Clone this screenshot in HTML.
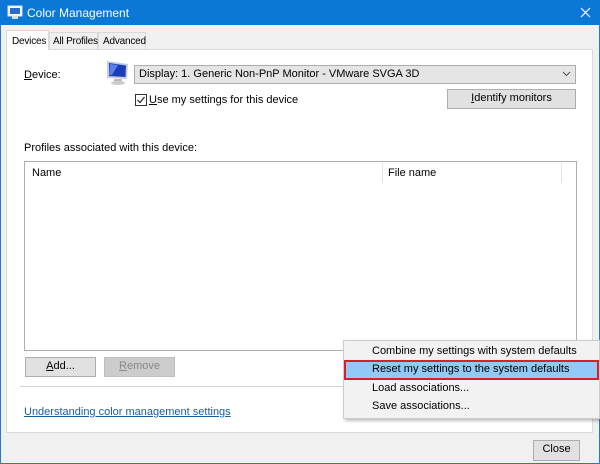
<!DOCTYPE html>
<html><head><meta charset="utf-8"><style>
*{box-sizing:border-box;margin:0;padding:0}
body{width:600px;height:464px;overflow:hidden;font-family:"Liberation Sans",sans-serif;font-size:11px;color:#000;background:#f0f0f0;position:relative}
.a{position:absolute;white-space:nowrap}
.btn{position:absolute;background:#e1e1e1;border:1px solid #adadad;text-align:center;line-height:17px;white-space:nowrap}
u{text-decoration:underline}
.tab{font-size:10px;letter-spacing:-0.2px}
</style></head><body>
<div class="a" style="left:0;top:0;width:600px;height:464px;border:1px solid #1f7ad0"></div>
<div class="a" style="left:0;top:0;width:600px;height:25px;background:#0a78d4"></div>
<svg class="a" style="left:7px;top:5px" width="16" height="15"><rect x="1" y="1" width="14" height="10" fill="#fff" stroke="#dde"/><rect x="3" y="3" width="10" height="6" fill="#2a6ac8"/><rect x="5" y="11" width="6" height="3" fill="#ddd"/></svg>
<div class="a" style="left:27px;top:6px;color:#fff;font-size:12px">Color Management</div>
<svg class="a" style="left:580px;top:7px" width="11" height="11"><path d="M1 1L10 10M10 1L1 10" stroke="#fff" stroke-width="1.2"/></svg>
<div class="a" style="left:6px;top:49px;width:587px;height:384px;background:#fff;border:1px solid #d9d9d9"></div>
<div class="a tab" style="left:6px;top:30px;width:43px;height:20px;background:#fff;border:1px solid #d9d9d9;border-bottom:none;padding:5px 0 0 5px">Devices</div>
<div class="a tab" style="left:49px;top:32px;width:49px;height:17px;background:#f0f0f0;border:1px solid #d9d9d9;border-bottom:none;padding:3px 0 0 3px">All Profiles</div>
<div class="a tab" style="left:98px;top:32px;width:48px;height:17px;background:#f0f0f0;border:1px solid #d9d9d9;border-bottom:none;padding:3px 0 0 4px">Advanced</div>
<div class="a" style="left:24px;top:69px"><u>D</u>evice:</div>
<svg class="a" style="left:104px;top:59px" width="26" height="27"><path d="M3 2L24 5L23 20L3 19Z" fill="#c8ccd8"/><path d="M5 4L22 6.5L21.5 18L5 17Z" fill="#1b3db8"/><path d="M6 5L14 6L8 16L5 16Z" fill="#5a80e8"/><rect x="10" y="20" width="8" height="3" fill="#bbb"/><ellipse cx="14" cy="24" rx="7" ry="2" fill="#ccc"/></svg>
<div class="a" style="left:134px;top:65px;width:442px;height:19px;background:#e5e5e5;border:1px solid #adadad;padding:2px 0 0 4px">Display: 1. Generic Non-PnP Monitor - VMware SVGA 3D</div>
<svg class="a" style="left:562px;top:71px" width="9" height="6"><path d="M1 1L4.5 4.5L8 1" stroke="#555" fill="none"/></svg>
<div class="a" style="left:135px;top:94px;width:12px;height:12px;border:1px solid #333;background:#fff"></div>
<svg class="a" style="left:136px;top:95px" width="10" height="10"><path d="M1.5 5L4 7.5L8.5 2" stroke="#222" fill="none" stroke-width="1.2"/></svg>
<div class="a" style="left:149px;top:94px"><u>U</u>se my settings for this device</div>
<div class="btn" style="left:447px;top:89px;width:129px;height:20px"><u>I</u>dentify monitors</div>
<div class="a" style="left:24px;top:142px">Profiles associated with this device:</div>
<div class="a" style="left:24px;top:161px;width:553px;height:190px;border:1px solid #adadad;background:#fff"></div>
<div class="a" style="left:32px;top:167px">Name</div>
<div class="a" style="left:382px;top:163px;width:1px;height:20px;background:#e5e5e5"></div>
<div class="a" style="left:561px;top:163px;width:1px;height:20px;background:#e5e5e5"></div>
<div class="a" style="left:388px;top:167px">File name</div>
<div class="btn" style="left:25px;top:357px;width:71px;height:20px"><u>A</u>dd...</div>
<div class="btn" style="left:104px;top:357px;width:71px;height:20px;background:#ccc;border-color:#bfbfbf;color:#888"><u>R</u>emove</div>
<div class="a" style="left:20px;top:386px;width:560px;height:1px;background:#d0d0d0"></div>
<div class="a" style="left:24px;top:406px;color:#1a5d9e;text-decoration:underline">Understanding color management settings</div>
<div class="btn" style="left:533px;top:440px;width:47px;height:21px">Close</div>
<div class="a" style="left:343px;top:340px;width:257px;height:79px;background:#f2f2f2;border:1px solid #ccc;box-shadow:2px 2px 3px rgba(0,0,0,.25)"></div>
<div class="a" style="left:372px;top:345px">Combine my settings with system defaults</div>
<div class="a" style="left:344px;top:360px;width:255px;height:20px;background:#91c9f7;border:2px solid #d8202a"></div>
<div class="a" style="left:372px;top:363px">Reset my settings to the system defaults</div>
<div class="a" style="left:372px;top:382px">Load associations...</div>
<div class="a" style="left:372px;top:400px">Save associations...</div>
</body></html>
